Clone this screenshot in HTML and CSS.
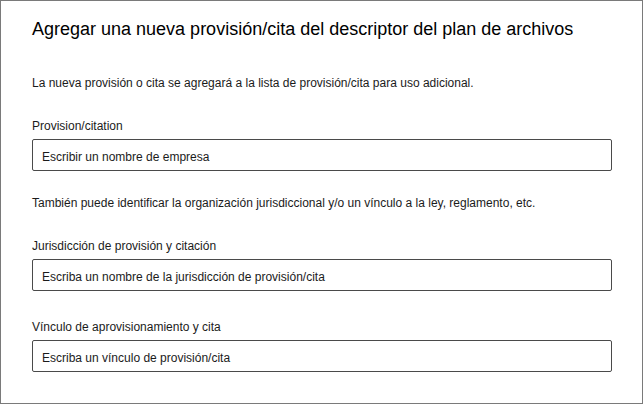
FILE: index.html
```html
<!DOCTYPE html>
<html lang="es">
<head>
<meta charset="utf-8">
<title>Agregar provisión/cita</title>
<link rel="stylesheet" href="styles.css">
</head>
<body>
<div class="dialog">
  <h1 class="title">Agregar una nueva provisión/cita del descriptor del plan de archivos</h1>
  <p class="desc">La nueva provisión o cita se agregará a la lista de provisión/cita para uso adicional.</p>
  <div class="field first">
    <label class="label" for="f1">Provision/citation</label>
    <input class="input" id="f1" type="text" placeholder="Escribir un nombre de empresa">
  </div>
  <p class="desc second">También puede identificar la organización jurisdiccional y/o un vínculo a la ley, reglamento, etc.</p>
  <div class="field juris">
    <label class="label" for="f2">Jurisdicción de provisión y citación</label>
    <input class="input" id="f2" type="text" placeholder="Escriba un nombre de la jurisdicción de provisión/cita">
  </div>
  <div class="field link">
    <label class="label" for="f3">Vínculo de aprovisionamiento y cita</label>
    <input class="input" id="f3" type="text" placeholder="Escriba un vínculo de provisión/cita">
  </div>
</div>
</body>
</html>
```

FILE: styles.css
```css
* { box-sizing: border-box; }
html, body { margin: 0; padding: 0; background: #fff; }
body { font-family: "Liberation Sans", Arial, sans-serif; color: #1b1b1b; }

.dialog {
  width: 643px;
  height: 404px;
  border: 1px solid #7a7a7a;
  padding: 16px 31px 0 31px;
  display: flex;
  flex-direction: column;
}

.title {
  margin: 0;
  font-size: 18px;
  line-height: 24px;
  font-weight: 400;
  color: #000;
}

.desc {
  margin: 34px 0 0 0;
  font-size: 12px;
  line-height: 16px;
}
.desc.second { margin-top: 24px; }

.field { display: flex; flex-direction: column; }
.field.first { margin-top: 27px; }
.field.juris { margin-top: 27px; }
.field.link { margin-top: 28px; }

.label {
  font-size: 12px;
  line-height: 16px;
  margin-bottom: 5px;
}

.input {
  width: 580px;
  height: 32px;
  border: 1px solid #4a4a4a;
  border-radius: 2px;
  padding: 3px 9px 0 9px;
  font-family: "Liberation Sans", Arial, sans-serif;
  font-size: 12px;
  color: #1b1b1b;
  outline: none;
  background: #fff;
}
.input::placeholder { color: #1b1b1b; opacity: 1; }
```
